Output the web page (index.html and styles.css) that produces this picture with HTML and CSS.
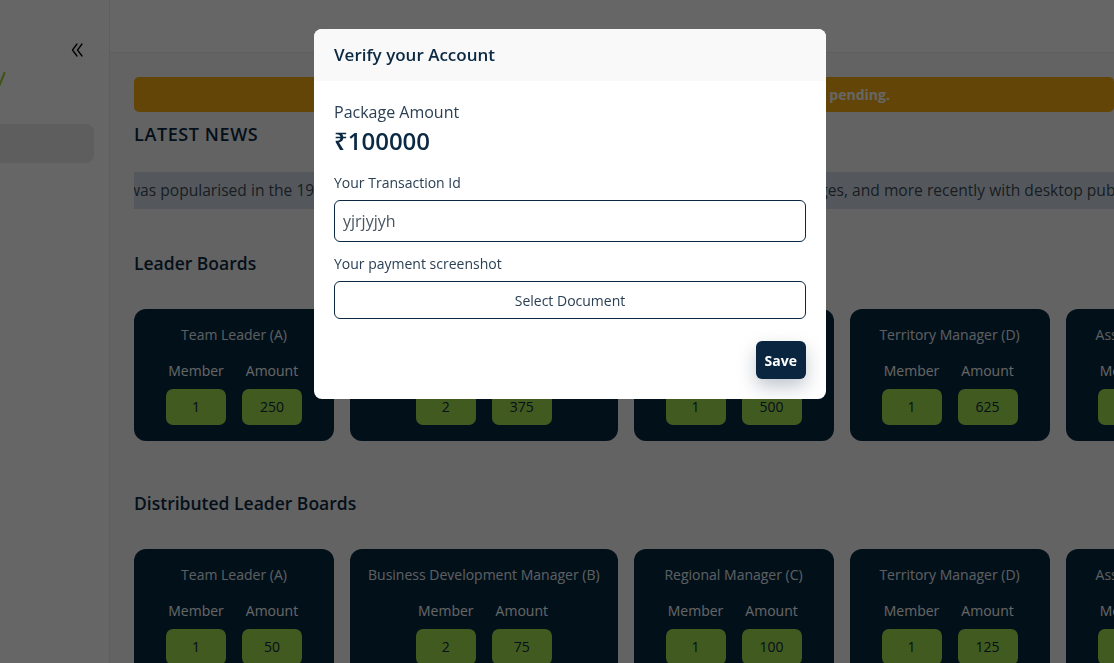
FILE: index.html
```html
<!DOCTYPE html>
<html lang="en">
<head>
<meta charset="utf-8">
<title>Dashboard - Verify your Account</title>
<link rel="stylesheet" href="styles.css">
</head>
<body>
<div class="app">
  <aside class="sidebar">
    <div class="side-top">
      <svg class="collapse" width="12" height="14" viewBox="0 0 12 14" aria-hidden="true">
        <path d="M6 1 L1.5 7 L6 13 M11 1 L6.5 7 L11 13" fill="none" stroke="#000" stroke-width="1.3" stroke-linecap="round" stroke-linejoin="round"/>
      </svg>
    </div>
    <div class="logo">
      <svg width="8" height="14" viewBox="0 0 8 14" aria-hidden="true">
        <path d="M0.5 13 L5.5 1" fill="none" stroke="#9fd13a" stroke-width="2.2" stroke-linecap="round"/>
      </svg>
    </div>
    <div class="nav-item active"></div>
  </aside>

  <main class="main">
    <header class="topbar"></header>
    <div class="content">
      <div class="alert">Please verify your account to continue. Your account verification is pending.</div>

      <h2 class="news-title">LATEST NEWS</h2>
      <div class="ticker"><span class="ticker-text">was popularised in the 1960s with the release of Letraset sheets containing Lorem Ipsum passages, and more recently with desktop publishing software like Aldus PageMaker including versions of Lorem Ipsum.</span></div>

      <section class="board">
        <h3 class="board-title">Leader Boards</h3>
        <div class="cards">
          <div class="card">
            <div class="card-title">Team Leader (A)</div>
            <div class="stats">
              <div class="stat"><div class="stat-label">Member</div><div class="stat-box">1</div></div>
              <div class="stat"><div class="stat-label">Amount</div><div class="stat-box">250</div></div>
            </div>
          </div>
          <div class="card">
            <div class="card-title">Business Development Manager (B)</div>
            <div class="stats">
              <div class="stat"><div class="stat-label">Member</div><div class="stat-box">2</div></div>
              <div class="stat"><div class="stat-label">Amount</div><div class="stat-box">375</div></div>
            </div>
          </div>
          <div class="card">
            <div class="card-title">Regional Manager (C)</div>
            <div class="stats">
              <div class="stat"><div class="stat-label">Member</div><div class="stat-box">1</div></div>
              <div class="stat"><div class="stat-label">Amount</div><div class="stat-box">500</div></div>
            </div>
          </div>
          <div class="card">
            <div class="card-title">Territory Manager (D)</div>
            <div class="stats">
              <div class="stat"><div class="stat-label">Member</div><div class="stat-box">1</div></div>
              <div class="stat"><div class="stat-label">Amount</div><div class="stat-box">625</div></div>
            </div>
          </div>
          <div class="card">
            <div class="card-title">Assistant Manager (E)</div>
            <div class="stats">
              <div class="stat"><div class="stat-label">Member</div><div class="stat-box">1</div></div>
              <div class="stat"><div class="stat-label">Amount</div><div class="stat-box">750</div></div>
            </div>
          </div>
        </div>
      </section>

      <section class="board board-second">
        <h3 class="board-title">Distributed Leader Boards</h3>
        <div class="cards">
          <div class="card">
            <div class="card-title">Team Leader (A)</div>
            <div class="stats">
              <div class="stat"><div class="stat-label">Member</div><div class="stat-box">1</div></div>
              <div class="stat"><div class="stat-label">Amount</div><div class="stat-box">50</div></div>
            </div>
          </div>
          <div class="card">
            <div class="card-title">Business Development Manager (B)</div>
            <div class="stats">
              <div class="stat"><div class="stat-label">Member</div><div class="stat-box">2</div></div>
              <div class="stat"><div class="stat-label">Amount</div><div class="stat-box">75</div></div>
            </div>
          </div>
          <div class="card">
            <div class="card-title">Regional Manager (C)</div>
            <div class="stats">
              <div class="stat"><div class="stat-label">Member</div><div class="stat-box">1</div></div>
              <div class="stat"><div class="stat-label">Amount</div><div class="stat-box">100</div></div>
            </div>
          </div>
          <div class="card">
            <div class="card-title">Territory Manager (D)</div>
            <div class="stats">
              <div class="stat"><div class="stat-label">Member</div><div class="stat-box">1</div></div>
              <div class="stat"><div class="stat-label">Amount</div><div class="stat-box">125</div></div>
            </div>
          </div>
          <div class="card">
            <div class="card-title">Assistant Manager (E)</div>
            <div class="stats">
              <div class="stat"><div class="stat-label">Member</div><div class="stat-box">1</div></div>
              <div class="stat"><div class="stat-label">Amount</div><div class="stat-box">150</div></div>
            </div>
          </div>
        </div>
      </section>
    </div>
  </main>
</div>

<div class="backdrop"></div>

<div class="modal-wrap">
  <div class="modal" role="dialog" aria-labelledby="modal-title">
    <div class="modal-header">
      <h4 class="modal-title" id="modal-title">Verify your Account</h4>
    </div>
    <div class="modal-body">
      <div class="pkg-label">Package Amount</div>
      <div class="pkg-amount">₹100000</div>
      <label class="field-label" for="txn">Your Transaction Id</label>
      <input class="field-input" id="txn" type="text" value="yjrjyjyh">
      <div class="field-label field-label-2">Your payment screenshot</div>
      <button class="doc-btn" type="button">Select Document</button>
      <div class="modal-actions">
        <button class="save-btn" type="button">Save</button>
      </div>
    </div>
  </div>
</div>
</body>
</html>
```

FILE: styles.css
```css
* {
  box-sizing: border-box;
}

html, body {
  margin: 0;
  padding: 0;
  height: 100%;
  overflow: hidden;
}

body {
  font-family: "Open Sans", "Noto Sans", "Liberation Sans", sans-serif;
  color: #0b2942;
  background: #ffffff;
}

.app {
  display: flex;
  height: 100%;
}

/* Sidebar */
.sidebar {
  width: 110px;
  flex-shrink: 0;
  background: #ffffff;
  border-right: 1px solid #ececec;
  box-shadow: 2px 0 6px rgba(0, 0, 0, 0.04);
  padding-top: 43px;
  display: flex;
  flex-direction: column;
}

.side-top {
  display: flex;
  justify-content: flex-end;
  padding-right: 26px;
  height: 14px;
}

.collapse {
  display: block;
}

.logo {
  margin-top: 15px;
  height: 14px;
  margin-left: -1px;
}

.logo svg {
  display: block;
}

.nav-item {
  margin-top: 38px;
  margin-left: -10px;
  width: 104px;
  height: 39px;
  border-radius: 8px;
}

.nav-item.active {
  background: #ebebeb;
}

/* Main */
.main {
  flex: 1;
  min-width: 0;
  display: flex;
  flex-direction: column;
  background: #f8f8f8;
}

.topbar {
  height: 53px;
  flex-shrink: 0;
  background: #ffffff;
  border-bottom: 1px solid #ececec;
}

.content {
  padding: 24px 0 0 24px;
}

.alert {
  height: 35px;
  line-height: 35px;
  border-radius: 5px;
  background: #f8af12;
  color: #ffffff;
  font-size: 14px;
  font-weight: 700;
  text-align: center;
  white-space: nowrap;
  overflow: hidden;
}

.news-title {
  margin: 10px 0 0;
  font-size: 18px;
  line-height: 24px;
  font-weight: 600;
  letter-spacing: 0.6px;
  color: #0b2942;
}

.ticker {
  margin-top: 26px;
  height: 37px;
  background: #d1dde9;
  overflow: hidden;
  white-space: nowrap;
}

.ticker-text {
  display: inline-block;
  margin-left: -6px;
  font-size: 15.6px;
  line-height: 37px;
  color: #3e4a56;
}

/* Boards */
.board {
  margin-top: 42px;
}

.board-second {
  margin-top: 50px;
}

.board-title {
  margin: 0;
  font-size: 17.5px;
  line-height: 24px;
  font-weight: 600;
  color: #0b2942;
}

.cards {
  margin-top: 34px;
  display: flex;
  gap: 16px;
}

.card {
  flex-shrink: 0;
  min-width: 200px;
  padding: 16px 18px 16px;
  background: #052841;
  border-radius: 12px;
  display: flex;
  flex-direction: column;
  align-items: center;
}

.card-title {
  font-size: 14px;
  line-height: 20px;
  color: #e6eef5;
  white-space: nowrap;
}

.stats {
  margin-top: 16px;
  display: flex;
  gap: 16px;
}

.stat {
  width: 60px;
  display: flex;
  flex-direction: column;
  align-items: center;
}

.stat-label {
  font-size: 14px;
  line-height: 20px;
  color: #ffffff;
  white-space: nowrap;
}

.stat-box {
  margin-top: 8px;
  width: 60px;
  height: 36px;
  line-height: 36px;
  border-radius: 7px;
  background: #a3e04f;
  color: #0b2942;
  font-size: 14px;
  text-align: center;
}

/* Backdrop + modal */
.backdrop {
  position: fixed;
  inset: 0;
  background: rgba(0, 0, 0, 0.6);
}

.modal-wrap {
  position: fixed;
  inset: 0;
  display: flex;
  justify-content: center;
  align-items: flex-start;
  padding-top: 29px;
  padding-left: 26px;
}

.modal {
  width: 512px;
  background: #ffffff;
  border-radius: 8px;
  overflow: hidden;
}

.modal-header {
  height: 52px;
  padding: 0 20px;
  background: #f9f9f9;
}

.modal-title {
  margin: 0;
  font-size: 17px;
  line-height: 52px;
  font-weight: 600;
  color: #0b2942;
}

.modal-body {
  padding: 20px;
  display: flex;
  flex-direction: column;
}

.pkg-label {
  font-size: 16px;
  line-height: 22px;
  color: #2b4055;
}

.pkg-amount {
  margin-top: 2px;
  font-size: 24px;
  line-height: 32px;
  font-weight: 600;
  color: #0b2942;
}

.field-label {
  margin-top: 16px;
  font-size: 14px;
  line-height: 20px;
  color: #2b4055;
}

.field-label-2 {
  margin-top: 12px;
}

.field-input {
  margin-top: 7px;
  height: 42px;
  width: 100%;
  padding: 0 8px;
  border: 1px solid #0b2942;
  border-radius: 6px;
  font-family: inherit;
  font-size: 16px;
  color: #4a5561;
  background: #ffffff;
  outline: none;
}

.doc-btn {
  margin-top: 7px;
  height: 38px;
  width: 100%;
  border: 1px solid #0b2942;
  border-radius: 6px;
  background: #ffffff;
  font-family: inherit;
  font-size: 14px;
  color: #2b4055;
  cursor: pointer;
}

.modal-actions {
  margin-top: 22px;
  display: flex;
  justify-content: flex-end;
}

.save-btn {
  height: 38px;
  padding: 0 9px;
  border: none;
  border-radius: 6px;
  background: #0a2540;
  color: #ffffff;
  font-family: inherit;
  font-size: 14px;
  font-weight: 700;
  box-shadow: 0 8px 18px rgba(10, 37, 64, 0.25);
  cursor: pointer;
}
```
